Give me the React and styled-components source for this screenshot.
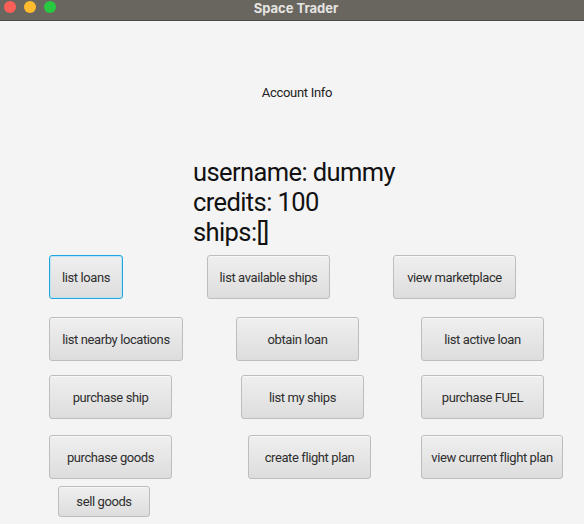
import React from 'react';
import styled, { createGlobalStyle } from 'styled-components';

const GlobalStyle = createGlobalStyle`
	html, body {
		margin: 0;
		padding: 0;
		background: #f4f4f4;
	}
	* {
		box-sizing: border-box;
	}
`;

const rows = [
	{
		gap: 0,
		small: false,
		buttons: [
			{ x: 49, w: 74, label: 'list loans', focused: true },
			{ x: 207, w: 123, label: 'list available ships' },
			{ x: 393, w: 123, label: 'view marketplace' },
		],
	},
	{
		gap: 18,
		buttons: [
			{ x: 49, w: 134, label: 'list nearby locations' },
			{ x: 236, w: 123, label: 'obtain loan' },
			{ x: 421, w: 123, label: 'list active loan' },
		],
	},
	{
		gap: 14,
		buttons: [
			{ x: 49, w: 123, label: 'purchase ship' },
			{ x: 241, w: 123, label: 'list my ships' },
			{ x: 421, w: 123, label: 'purchase FUEL' },
		],
	},
	{
		gap: 16,
		buttons: [
			{ x: 49, w: 123, label: 'purchase goods' },
			{ x: 248, w: 123, label: 'create flight plan' },
			{ x: 421, w: 142, label: 'view current flight plan' },
		],
	},
	{
		gap: 7,
		small: true,
		buttons: [{ x: 58, w: 92, label: 'sell goods' }],
	},
];

const TrafficLights = () => (
	<Lights>
		<Light $color="#fe5f57" />
		<Light $color="#febc2e" />
		<Light $color="#28c840" />
	</Lights>
);

const App = () => {
	return (
		<Window>
			<GlobalStyle />
			<TitleBar>
				<TrafficLights />
				<Title>Space Trader</Title>
			</TitleBar>
			<Content>
				<Heading>Account Info</Heading>
				<Info>
					<InfoLine>username: dummy</InfoLine>
					<InfoLine>credits: 100</InfoLine>
					<InfoLine>ships:[]</InfoLine>
				</Info>
				<ButtonArea>
					{rows.map((row, i) => (
						<Row key={i} $gap={row.gap} $small={row.small}>
							{row.buttons.map((b, j) => {
								const prev = row.buttons[j - 1];
								const offset = prev ? b.x - (prev.x + prev.w) : b.x;
								return (
									<ActionButton key={b.label} $offset={offset} $w={b.w} $focused={b.focused}>
										{b.label}
									</ActionButton>
								);
							})}
						</Row>
					))}
				</ButtonArea>
			</Content>
		</Window>
	);
};

export default App;

const Window = styled.div`
	width: 584px;
	height: 524px;
	overflow: hidden;
	display: flex;
	flex-direction: column;
	background: #f4f4f4;
	font-family: 'Roboto', 'Inter', sans-serif;
	color: #1a1a1a;
`;

const TitleBar = styled.div`
	position: relative;
	height: 21px;
	flex-shrink: 0;
	background: #69655f;
	border-bottom: 1px solid #4c4944;
	display: flex;
	align-items: center;
	justify-content: center;
`;

const Lights = styled.div`
	position: absolute;
	left: 4px;
	top: 1px;
	display: flex;
	gap: 8px;
`;

const Light = styled.span`
	width: 12px;
	height: 12px;
	border-radius: 50%;
	background: ${({ $color }) => $color};
`;

const Title = styled.div`
	font-family: 'Inter', sans-serif;
	font-size: 13px;
	font-weight: 700;
	color: #e6e4e1;
	margin-top: -4px;
	padding-left: 8px;
`;

const Content = styled.div`
	flex: 1;
	display: flex;
	flex-direction: column;
`;

const Heading = styled.div`
	margin-top: 64px;
	text-align: center;
	font-size: 13px;
	line-height: 16px;
	letter-spacing: -0.3px;
	padding-left: 10px;
	color: #222;
`;

const Info = styled.div`
	margin-top: 56px;
	margin-left: 193px;
	display: flex;
	flex-direction: column;
`;

const InfoLine = styled.div`
	font-size: 25.5px;
	line-height: 30px;
	letter-spacing: -0.6px;
	color: #111;
`;

const ButtonArea = styled.div`
	margin-top: 8px;
	display: flex;
	flex-direction: column;
`;

const Row = styled.div`
	display: flex;
	margin-top: ${({ $gap }) => $gap}px;
	height: ${({ $small }) => ($small ? 31 : 44)}px;
`;

const ActionButton = styled.div`
	margin-left: ${({ $offset }) => $offset}px;
	width: ${({ $w }) => $w}px;
	height: 100%;
	display: flex;
	align-items: center;
	justify-content: center;
	font-size: 13px;
	letter-spacing: -0.4px;
	color: #2e2e2e;
	white-space: nowrap;
	border-radius: 3px;
	border: 1px solid ${({ $focused }) => ($focused ? '#1ea6de' : '#bdbdbd')};
	box-shadow: ${({ $focused }) =>
		$focused ? 'inset 0 0 0 1px #bfe3f3' : 'inset 0 1px 0 #f7f7f7'};
	background: linear-gradient(#efefef, #dddddd);
`;
